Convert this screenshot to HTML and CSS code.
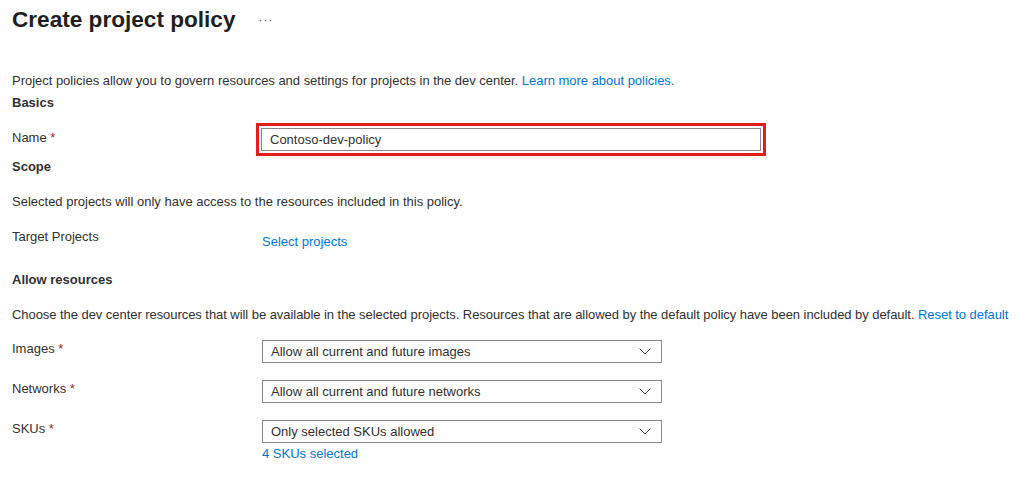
FILE: index.html
```html
<!DOCTYPE html>
<html>
<head>
<meta charset="utf-8">
<link rel="stylesheet" href="styles.css">
</head>
<body>
<div class="page">
  <div class="header">
    <h1 class="title">Create project policy</h1>
    <span class="more">···</span>
  </div>
  <p class="desc intro">Project policies allow you to govern resources and settings for projects in the dev center. <a class="link">Learn more about policies.</a></p>
  <h2 class="section basics">Basics</h2>
  <div class="row name-row">
    <div class="label">Name <span class="req">*</span></div>
    <div class="field">
      <div class="highlight"><div class="input">Contoso-dev-policy</div></div>
    </div>
  </div>
  <h2 class="section scope">Scope</h2>
  <p class="desc scope-desc">Selected projects will only have access to the resources included in this policy.</p>
  <div class="row target-row">
    <div class="label">Target Projects</div>
    <div class="field"><a class="link select-link">Select projects</a></div>
  </div>
  <h2 class="section allow">Allow resources</h2>
  <p class="desc allow-desc">Choose the dev center resources that will be available in the selected projects. Resources that are allowed by the default policy have been included by default. <a class="link">Reset to default</a></p>
  <div class="row dd-row first-dd">
    <div class="label">Images <span class="req">*</span></div>
    <div class="field">
      <div class="dropdown"><span>Allow all current and future images</span><svg class="chev" width="12" height="7" viewBox="0 0 12 7"><path d="M0.5 0.5 L6 6 L11.5 0.5" fill="none" stroke="#323130" stroke-width="0.9"/></svg></div>
    </div>
  </div>
  <div class="row dd-row">
    <div class="label">Networks <span class="req">*</span></div>
    <div class="field">
      <div class="dropdown"><span>Allow all current and future networks</span><svg class="chev" width="12" height="7" viewBox="0 0 12 7"><path d="M0.5 0.5 L6 6 L11.5 0.5" fill="none" stroke="#323130" stroke-width="0.9"/></svg></div>
    </div>
  </div>
  <div class="row dd-row">
    <div class="label">SKUs <span class="req">*</span></div>
    <div class="field">
      <div class="dropdown"><span>Only selected SKUs allowed</span><svg class="chev" width="12" height="7" viewBox="0 0 12 7"><path d="M0.5 0.5 L6 6 L11.5 0.5" fill="none" stroke="#323130" stroke-width="0.9"/></svg></div>
      <a class="link skus-link">4 SKUs selected</a>
    </div>
  </div>
</div>
</body>
</html>
```

FILE: styles.css
```css
* { box-sizing: border-box; }
html, body { margin: 0; padding: 0; background: #fff; }
body {
  font-family: "Liberation Sans", Arial, sans-serif;
  font-size: 13px;
  color: #323130;
  line-height: 18px;
}
.page { padding: 0 12px; }
.header { display: flex; align-items: center; height: 40px; }
.title {
  margin: 0;
  font-size: 22.6px;
  font-weight: 600;
  color: #201f1e;
}
.more { margin-left: 23px; color: #605e5c; font-size: 12px; letter-spacing: 1px; }
.desc { margin: 0; white-space: nowrap; }
.intro { margin-top: 32px; letter-spacing: -0.02px; }
.link { color: #0078d4; text-decoration: none; }
.section { margin: 0; font-size: 13px; font-weight: 700; line-height: 18px; }
.basics { margin-top: 4px; }
.row { display: flex; }
.label { width: 250px; flex: none; }
.req { color: #a4262c; }
.field { width: 510px; }
.name-row { margin-top: 11px; }
.name-row .label { padding-top: 6px; }
.highlight { border: 3px solid #e31c1c; padding: 2px; margin-left: -6px; width: 510px; }
.input {
  height: 23px;
  border: 1px solid #8a8886;
  padding: 0 8px;
  line-height: 21px;
}
.scope { margin-top: 2px; }
.scope-desc { margin-top: 17px; }
.target-row { margin-top: 17px; }
.select-link { display: block; margin-top: 5px; }
.allow { margin-top: 20px; }
.allow-desc { margin-top: 17px; letter-spacing: -0.055px; }
.dd-row { margin-top: 17px; }
.dd-row.first-dd { margin-top: 16px; }
.dd-row .field { width: 400px; }
.dropdown {
  height: 23px;
  border: 1px solid #8a8886;
  display: flex;
  align-items: center;
  justify-content: space-between;
  padding: 0 10px 0 8px;
}
.chev { flex: none; }
.skus-link { display: block; margin-top: 2px; }
```
